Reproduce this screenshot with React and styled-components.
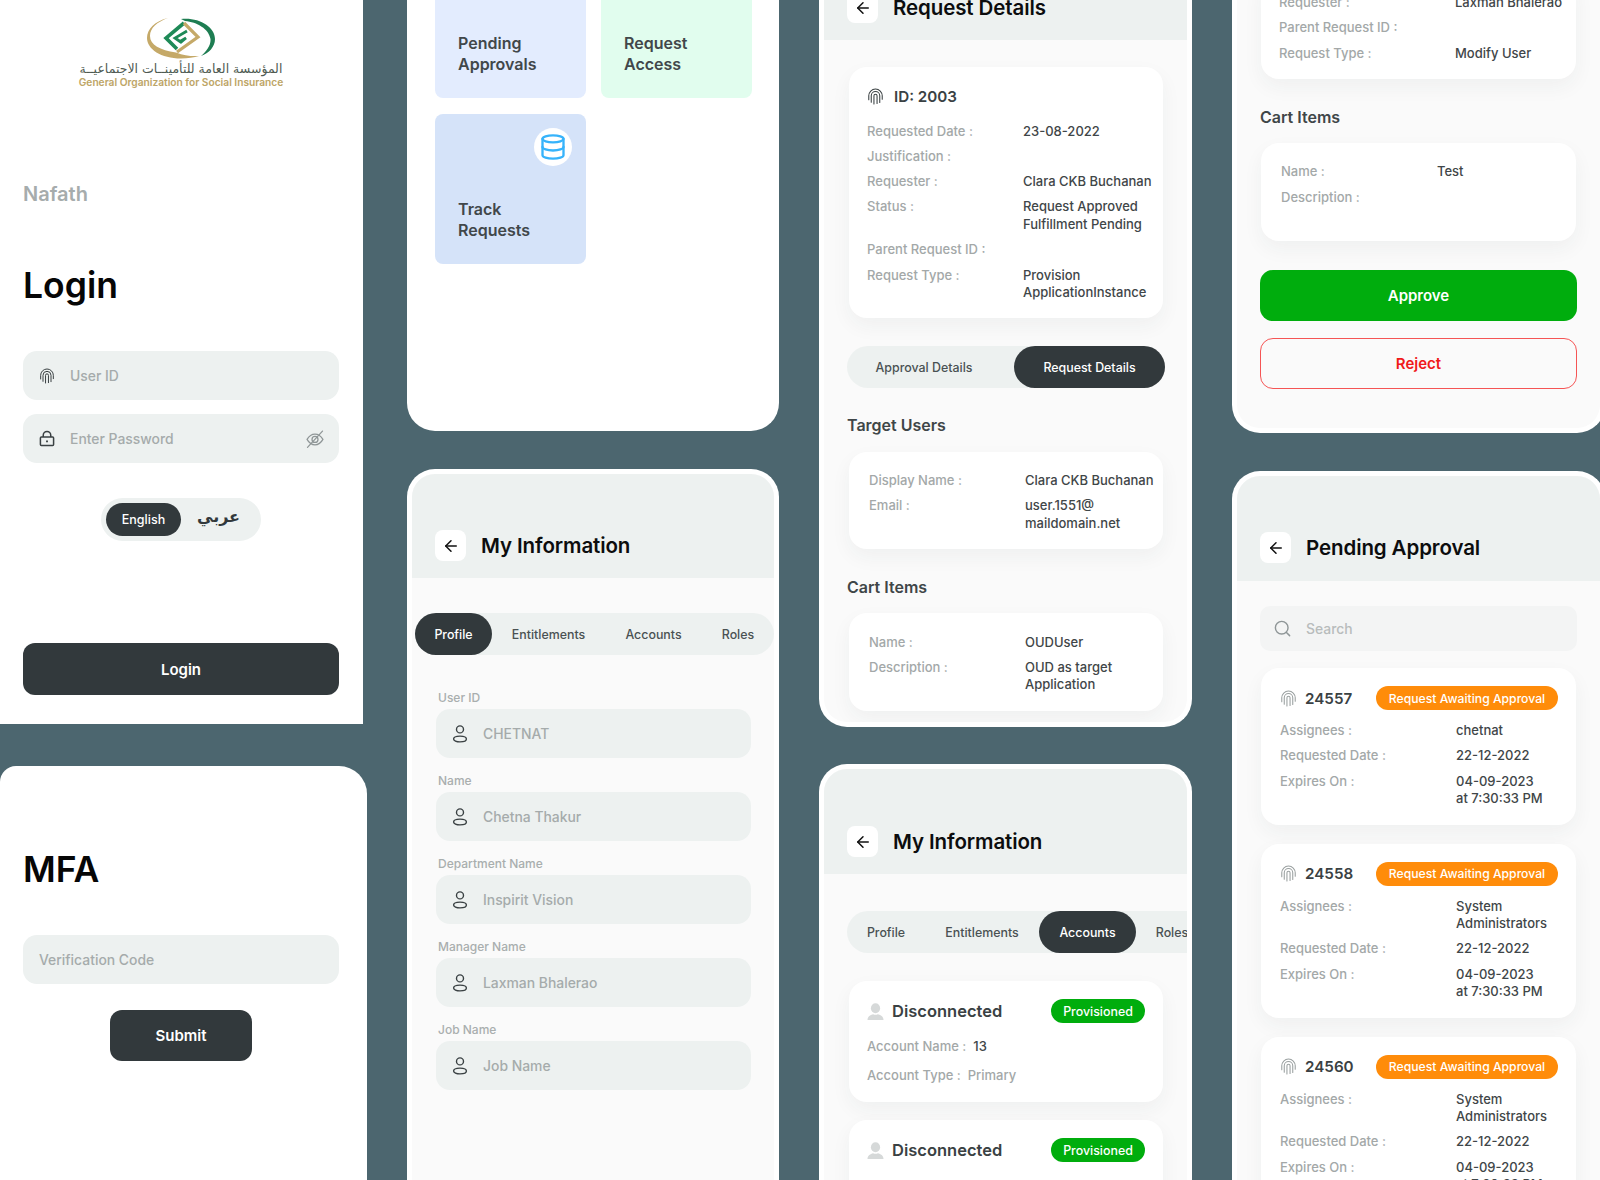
import React from "react";
import styled, { createGlobalStyle } from "styled-components";
import { ArrowLeft, Database, Search } from "lucide-react";

const GlobalStyle = createGlobalStyle`
  html, body {
    margin: 0;
    padding: 0;
    background: #4c666f;
  }
  * {
    box-sizing: border-box;
  }
  body {
    font-family: "Inter", "Noto Sans", "Liberation Sans", sans-serif;
    color: #3a4143;
  }
`;

const Page = styled.div`
  width: 1600px;
  height: 1180px;
  overflow: hidden;
  display: flex;
  gap: 40px;
  background: #4c666f;
`;

const Column = styled.div`
  flex: none;
  width: ${(p) => p.$w}px;
  height: 1180px;
  display: flex;
  flex-direction: column;
  justify-content: space-between;
`;

const Sheet = styled.section`
  flex: none;
  width: ${(p) => p.$w || 367}px;
  height: ${(p) => p.$h}px;
  background: #fff;
  overflow: hidden;
  padding: ${(p) => p.$pad || "0"};
  display: flex;
  flex-direction: column;
  border-radius: ${(p) => p.$radius || "0"};
`;

// phone frame with the white rim, the open side is cut by the page edge
const Phone = styled.section`
  flex: none;
  width: 100%;
  height: ${(p) => p.$h}px;
  background: ${(p) => p.$bg || "#fafafa"};
  border: 5px solid #fff;
  ${(p) => (p.$bottom ? "border-top: 0;" : "border-bottom: 0;")}
  border-radius: ${(p) => (p.$bottom ? "0 0 28px 28px" : "28px 28px 0 0")};
  overflow: hidden;
  display: flex;
  flex-direction: column;
  justify-content: ${(p) => (p.$bottom ? "flex-end" : "flex-start")};
`;

const Head = styled.header`
  flex: none;
  height: ${(p) => p.$h || 105}px;
  background: #edf1f0;
  padding: 0 0 ${(p) => p.$pb || 17}px 23px;
  display: flex;
  align-items: flex-end;
  gap: 15px;
`;

const BackButton = styled.div`
  width: 31px;
  height: 31px;
  border-radius: 8px;
  background: #fff;
  color: #111;
  display: flex;
  align-items: center;
  justify-content: center;
`;

const HeadTitle = styled.h2`
  margin: 0;
  height: 31px;
  line-height: 31px;
  font-size: 20.5px;
  font-weight: 600;
  color: #0c0d0e;
  letter-spacing: -0.1px;
  white-space: nowrap;
`;

const Body = styled.div`
  flex: none;
  padding: ${(p) => p.$pad || "0 23px"};
  display: flex;
  flex-direction: column;
`;

/* login */
const LogoBlock = styled.div`
  height: 70px;
  display: flex;
  flex-direction: column;
  align-items: center;
  margin-top: 18px;
`;

const LogoArabic = styled.div`
  font-family: "DejaVu Sans", sans-serif;
  font-size: 12.5px;
  line-height: 14px;
  margin-top: 3px;
  color: #4f5b52;
  white-space: nowrap;
`;

const LogoLatin = styled.div`
  font-size: 10.2px;
  line-height: 12px;
  font-weight: 600;
  color: #bda566;
  white-space: nowrap;
`;

const Nafath = styled.div`
  margin-top: 94px;
  font-size: 20px;
  line-height: 24px;
  font-weight: 600;
  color: #a6acac;
`;

const BigTitle = styled.h1`
  margin: ${(p) => p.$mt}px 0 0;
  font-size: 35.5px;
  line-height: 44px;
  font-weight: 600;
  color: #060606;
`;

const InputBox = styled.div`
  flex: none;
  height: 49px;
  margin-top: ${(p) => p.$mt || 0}px;
  border-radius: 14px;
  background: #edf1f0;
  padding: 0 14px 0 16px;
  display: flex;
  align-items: center;
  gap: 15px;
  color: #3a4143;
`;

const Placeholder = styled.span`
  flex: 1;
  font-size: 13.9px;
  font-weight: 500;
  color: #a5abab;
`;

const LangToggle = styled.div`
  align-self: center;
  margin-top: 35px;
  width: 160px;
  height: 43px;
  padding: 5px;
  border-radius: 22px;
  background: #edf1f0;
  display: flex;
  align-items: center;
`;

const LangOn = styled.div`
  width: 75px;
  height: 33px;
  border-radius: 17px;
  background: #32393c;
  color: #fff;
  font-size: 12.5px;
  font-weight: 500;
  display: flex;
  align-items: center;
  justify-content: center;
`;

const LangOff = styled.div`
  flex: 1;
  text-align: center;
  font-family: "DejaVu Sans", sans-serif;
  font-size: 16px;
  font-weight: 700;
  line-height: 24px;
  margin-bottom: 5px;
  color: #32393c;
`;

const DarkButton = styled.div`
  flex: none;
  align-self: ${(p) => (p.$w ? "center" : "stretch")};
  width: ${(p) => (p.$w ? `${p.$w}px` : "auto")};
  height: ${(p) => p.$h}px;
  margin-top: ${(p) => p.$mt}px;
  border-radius: 12px;
  background: #32393c;
  color: #fff;
  font-size: 15px;
  font-weight: 600;
  display: flex;
  align-items: center;
  justify-content: center;
`;

/* home tiles */
const TileGrid = styled.div`
  display: grid;
  grid-template-columns: 151px 151px;
  gap: 16px 15px;
  padding: 0 0 162px 23px;
`;

const Tile = styled.div`
  height: 150px;
  border-radius: 8px;
  background: ${(p) => p.$bg};
  padding: 14px 14px 23px 23px;
  display: flex;
  flex-direction: column;
  justify-content: space-between;
`;

const TileBadge = styled.div`
  align-self: flex-end;
  width: 38px;
  height: 38px;
  border-radius: 50%;
  background: #fff;
  color: #36b3fb;
  display: flex;
  align-items: center;
  justify-content: center;
`;

const TileText = styled.div`
  font-size: 16px;
  line-height: 21px;
  font-weight: 600;
  color: #41474a;
`;

/* tabs */
const Tabs = styled.div`
  flex: none;
  display: flex;
  justify-content: ${(p) => (p.$split ? "space-between" : "flex-start")};
  width: ${(p) => p.$w}px;
  height: 42px;
  margin: ${(p) => p.$margin};
  border-radius: 21px;
  background: #edf1f0;
`;

const Tab = styled.div`
  flex: none;
  width: ${(p) => p.$w}px;
  border-radius: 21px;
  background: ${(p) => (p.$on ? "#32393c" : "transparent")};
  color: ${(p) => (p.$on ? "#fff" : "#4a5153")};
  font-size: 12.4px;
  font-weight: 500;
  display: flex;
  align-items: center;
  justify-content: center;
`;

/* profile form */
const FieldList = styled.div`
  margin: 36px 23px 0 24px;
  display: flex;
  flex-direction: column;
  gap: 16px;
`;

const Field = styled.div`
  display: flex;
  flex-direction: column;
  gap: 4px;
`;

const FieldLabel = styled.label`
  padding-left: 2px;
  font-size: 12px;
  line-height: 14px;
  font-weight: 500;
  color: #a9aeae;
`;

/* cards */
const Card = styled.div`
  flex: none;
  margin: ${(p) => p.$margin || "0 2px"};
  padding: ${(p) => p.$pad || "18px 14px 18px 18px"};
  background: #fff;
  border-radius: 18px;
  box-shadow: 0 8px 20px rgba(40, 50, 55, 0.05);
`;

const CardHead = styled.div`
  display: flex;
  align-items: center;
  justify-content: space-between;
  height: 24px;
  margin-bottom: ${(p) => p.$mb || 14}px;
`;

const IdWrap = styled.div`
  display: flex;
  align-items: center;
  gap: ${(p) => p.$gap || 10}px;
  color: ${(p) => p.$icon || "#3a4143"};
`;

const IdText = styled.span`
  font-size: ${(p) => p.$size || 15.2}px;
  font-weight: 600;
  color: #3a4143;
`;

const Pill = styled.span`
  flex: none;
  height: 24px;
  width: ${(p) => p.$w}px;
  border-radius: 12px;
  background: ${(p) => p.$bg};
  color: #fff;
  font-size: ${(p) => p.$size || 12.2}px;
  font-weight: 500;
  display: flex;
  align-items: center;
  justify-content: center;
`;

const Rows = styled.div`
  display: grid;
  grid-template-columns: ${(p) => p.$col || 156}px 1fr;
  row-gap: 7.8px;
  font-size: 13px;
  line-height: 17.5px;
  font-weight: 500;
`;

const RowLabel = styled.div`
  color: #a3a8a8;
  white-space: nowrap;
`;

const RowValue = styled.div`
  color: #3f4648;
  white-space: pre-line;
`;

const SectionTitle = styled.h3`
  margin: ${(p) => p.$mt}px 0 ${(p) => p.$mb}px;
  font-size: 16px;
  line-height: 24px;
  font-weight: 600;
  color: #3f4648;
`;

const InlineRow = styled.div`
  display: flex;
  gap: 7px;
  margin-top: ${(p) => p.$mt || 0}px;
  font-size: 13px;
  line-height: 17.5px;
  font-weight: 500;
  color: #a3a8a8;
`;

const InlineValue = styled.span`
  color: ${(p) => p.$color || "#3f4648"};
`;

/* approve screen buttons */
const ActionButton = styled.div`
  flex: none;
  height: 51px;
  margin-top: ${(p) => p.$mt}px;
  border-radius: 13px;
  font-size: 15px;
  font-weight: 600;
  background: ${(p) => (p.$green ? "#00ad0d" : "transparent")};
  color: ${(p) => (p.$green ? "#fff" : "#f01a1a")};
  border: ${(p) => (p.$green ? "0" : "1.5px solid #f55454")};
  display: flex;
  align-items: center;
  justify-content: center;
`;

const SearchBox = styled.div`
  flex: none;
  height: 45px;
  margin-top: 25px;
  border-radius: 10px;
  background: #f3f4f4;
  padding: 0 13px;
  display: flex;
  align-items: center;
  gap: 14px;
  font-size: 13.9px;
  font-weight: 500;
  color: #b8bcbc;
`;

const ApprovalList = styled.div`
  margin-top: 17px;
  display: flex;
  flex-direction: column;
  gap: 18.5px;
`;

/* drawn icons */
const Fingerprint = ({ size = 17 }) => (
  <svg width={size} height={size} viewBox="0 0 24 24" fill="none" stroke="currentColor" strokeWidth="1.5" strokeLinecap="round">
    <path d="M2.5 16.500V11a9.500 9.500 0 0 1 19 0v5" />
    <path d="M6 20V11a6 6 0 0 1 12 0v9.500" />
    <path d="M9.800 22.500V11a2.200 2.200 0 0 1 4.400 0v11" />
  </svg>
);

const LockIcon = () => (
  <svg width="16" height="17" viewBox="0 0 17 17" fill="none" stroke="#3a4143" strokeWidth="1.600">
    <rect x="1.500" y="7" width="14" height="9" rx="1" />
    <path d="M4.500 7V5a4 4 0 0 1 8 0v2" />
    <path d="M8.500 10.500v2" strokeWidth="2" />
  </svg>
);

const EyeSlash = () => (
  <svg width="20" height="20" viewBox="0 0 24 24" fill="none" stroke="#8f9697" strokeWidth="1.500" strokeLinecap="round">
    <path d="M2.500 12.500C5 8 8.200 6 12 6s7 2 9.500 6.500C19 17 15.800 19 12 19s-7-2-9.500-6.500Z" />
    <circle cx="12" cy="12.500" r="3.600" />
    <path d="M21 2.500 3 22" />
  </svg>
);

const PersonOutline = () => (
  <svg width="16" height="18" viewBox="0 0 16 18" fill="none" stroke="#3a4143" strokeWidth="1.400">
    <circle cx="8" cy="4.400" r="3.500" />
    <ellipse cx="8" cy="14" rx="6.400" ry="2.900" />
  </svg>
);

const PersonSolid = () => (
  <svg width="17" height="17" viewBox="0 0 17 17" fill="#d6d9d9">
    <ellipse cx="8.500" cy="5.200" rx="4.600" ry="5" />
    <path d="M0.500 17c0-3.600 3-5.200 5.600-5.800 1.500.7 3.300.7 4.800 0 2.600.6 5.600 2.200 5.600 5.800Z" />
  </svg>
);

const Emblem = () => (
  <svg width="68" height="41" viewBox="0 0 68 41" fill="none">
    <path d="M21 0C8 3 0 11 0 20c0 11 14 20.500 34 20.500 7 0 13-1 18-2.500-8 .5-15-.5-23-3.500C13 32 3 27 3 18 3 10 10 4 21 0Z" fill="#c5a968" />
    <path d="M34 1C52 -1 68 9 68 21c0 8-6 14-14 17 6-5 10-11 9.500-17C62 11 50 4 38 3Z" fill="#1e7d52" />
    <path d="M37 5 19 20l11 11" stroke="#1e8a57" strokeWidth="3.600" />
    <path d="M37 5l14 14-21 15" stroke="#c5a968" strokeWidth="3.200" />
    <path d="M40 13 28 20l5 3.500 6-3.500-6 5" stroke="#1e8a57" strokeWidth="2.800" />
  </svg>
);

const Back = () => (
  <BackButton>
    <ArrowLeft size={18} strokeWidth={2} />
  </BackButton>
);

const DetailRows = ({ rows, col }) => (
  <Rows $col={col}>
    {rows.map(([label, value]) => (
      <React.Fragment key={label}>
        <RowLabel>{label}</RowLabel>
        <RowValue>{value}</RowValue>
      </React.Fragment>
    ))}
  </Rows>
);

const profileFields = [
  ["User ID", "CHETNAT"],
  ["Name", "Chetna Thakur"],
  ["Department Name", "Inspirit Vision"],
  ["Manager Name", "Laxman Bhalerao"],
  ["Job Name", "Job Name"],
];

const approvals = [
  {
    id: "24557",
    rows: [
      ["Assignees :", "chetnat"],
      ["Requested Date :", "22-12-2022"],
      ["Expires On :", "04-09-2023\nat 7:30:33 PM"],
    ],
  },
  {
    id: "24558",
    rows: [
      ["Assignees :", "System\nAdministrators"],
      ["Requested Date :", "22-12-2022"],
      ["Expires On :", "04-09-2023\nat 7:30:33 PM"],
    ],
  },
  {
    id: "24560",
    rows: [
      ["Assignees :", "System\nAdministrators"],
      ["Requested Date :", "22-12-2022"],
      ["Expires On :", "04-09-2023\nat 7:30:33 PM"],
    ],
  },
];

const App = () => (
  <Page>
    <GlobalStyle />

    <Column $w={367}>
      <Sheet $w={363} $h={724} $pad="0 24px 0 23px">
        <LogoBlock>
          <Emblem />
          <LogoArabic dir="rtl">المؤسسة العامة للتأمينــات الاجتماعيــة</LogoArabic>
          <LogoLatin>General Organization for Social Insurance</LogoLatin>
        </LogoBlock>
        <Nafath>Nafath</Nafath>
        <BigTitle $mt={58}>Login</BigTitle>
        <InputBox $mt={43}>
          <Fingerprint size={16} />
          <Placeholder>User ID</Placeholder>
        </InputBox>
        <InputBox $mt={14}>
          <LockIcon />
          <Placeholder>Enter Password</Placeholder>
          <EyeSlash />
        </InputBox>
        <LangToggle>
          <LangOn>English</LangOn>
          <LangOff>عربي</LangOff>
        </LangToggle>
        <DarkButton $h={52} $mt={102}>Login</DarkButton>
      </Sheet>
      <Sheet $h={414} $pad="82px 28px 0 23px" $radius="16px 28px 0 0">
        <BigTitle $mt={0}>MFA</BigTitle>
        <InputBox $mt={43}>
          <Placeholder>Verification Code</Placeholder>
        </InputBox>
        <DarkButton $w={142} $h={51} $mt={26}>Submit</DarkButton>
      </Sheet>
    </Column>

    <Column $w={372}>
      <Phone $h={431} $bottom $bg="#fff">
        <TileGrid>
          <Tile $bg="#e3ecfe">
            <TileBadge />
            <TileText>Pending<br />Approvals</TileText>
          </Tile>
          <Tile $bg="#e1fdee">
            <TileBadge />
            <TileText>Request<br />Access</TileText>
          </Tile>
          <Tile $bg="#d5e3f9">
            <TileBadge>
              <Database size={28} strokeWidth={2} />
            </TileBadge>
            <TileText>Track<br />Requests</TileText>
          </Tile>
        </TileGrid>
      </Phone>
      <Phone $h={711}>
        <Head $h={104}>
          <Back />
          <HeadTitle>My Information</HeadTitle>
        </Head>
        <Tabs $w={359} $margin="35px 0 0 3px">
          <Tab $w={77} $on>Profile</Tab>
          <Tab $w={113}>Entitlements</Tab>
          <Tab $w={97}>Accounts</Tab>
          <Tab $w={72}>Roles</Tab>
        </Tabs>
        <FieldList>
          {profileFields.map(([label, value]) => (
            <Field key={label}>
              <FieldLabel>{label}</FieldLabel>
              <InputBox>
                <PersonOutline />
                <Placeholder>{value}</Placeholder>
              </InputBox>
            </Field>
          ))}
        </FieldList>
      </Phone>
    </Column>

    <Column $w={373}>
      <Phone $h={727} $bottom>
        <Head>
          <Back />
          <HeadTitle>Request Details</HeadTitle>
        </Head>
        <Body $pad="27px 22px 11px 23px">
          <Card $pad="17px 6px 16.500px 18px">
            <CardHead $mb={14.500}>
              <IdWrap>
                <Fingerprint />
                <IdText>ID: 2003</IdText>
              </IdWrap>
            </CardHead>
            <DetailRows
              rows={[
                ["Requested Date :", "23-08-2022"],
                ["Justification :", ""],
                ["Requester :", "Clara CKB Buchanan"],
                ["Status :", "Request Approved\nFulfillment Pending"],
                ["Parent Request ID :", ""],
                ["Request Type :", "Provision\nApplicationInstance"],
              ]}
            />
          </Card>
          <Tabs $w={318} $margin="28px 0 0" $split>
            <Tab $w={154}>Approval Details</Tab>
            <Tab $w={151} $on>Request Details</Tab>
          </Tabs>
          <SectionTitle $mt={25} $mb={15}>Target Users</SectionTitle>
          <Card $pad="20px 6px 16.700px 20px">
            <DetailRows
              rows={[
                ["Display Name :", "Clara CKB Buchanan"],
                ["Email :", "user.1551@\nmaildomain.net"],
              ]}
            />
          </Card>
          <SectionTitle $mt={26} $mb={14}>Cart Items</SectionTitle>
          <Card $pad="20.500px 6px 17.200px 20px">
            <DetailRows
              rows={[
                ["Name :", "OUDUser"],
                ["Description :", "OUD as target\nApplication"],
              ]}
            />
          </Card>
        </Body>
      </Phone>
      <Phone $h={416}>
        <Head>
          <Back />
          <HeadTitle>My Information</HeadTitle>
        </Head>
        <Tabs $w={380} $margin="37px 0 0 23px">
          <Tab $w={78}>Profile</Tab>
          <Tab $w={114}>Entitlements</Tab>
          <Tab $w={97} $on>Accounts</Tab>
          <Tab $w={72}>Roles</Tab>
        </Tabs>
        <Body $pad="28px 22px 0 23px">
          {[0, 1].map((n) => (
            <Card key={n} $margin={n ? "18px 2px 0" : "0 2px"} $pad="18px 18px 17.500px 18px">
              <CardHead $mb={15}>
                <IdWrap $gap={8}>
                  <PersonSolid />
                  <IdText $size={16.500}>Disconnected</IdText>
                </IdWrap>
                <Pill $w={94} $bg="#00ad0d" $size={12.400}>Provisioned</Pill>
              </CardHead>
              <InlineRow>
                Account Name :<InlineValue>13</InlineValue>
              </InlineRow>
              <InlineRow $mt={11.500}>
                Account Type :<InlineValue $color="#a3a8a8">Primary</InlineValue>
              </InlineRow>
            </Card>
          ))}
        </Body>
      </Phone>
    </Column>

    <Column $w={373}>
      <Phone $h={433} $bottom>
        <Body $pad="0 23px 39px">
          <Card $margin="0 1px" $pad="18px 6px 17px 18px">
            <DetailRows
              col={176}
              rows={[
                ["Requester :", "Laxman Bhalerao"],
                ["Parent Request ID :", ""],
                ["Request Type :", "Modify User"],
              ]}
            />
          </Card>
          <SectionTitle $mt={26} $mb={14}>Cart Items</SectionTitle>
          <Card $margin="0 1px" $pad="20px 14px 35px 20px">
            <DetailRows
              rows={[
                ["Name :", "Test"],
                ["Description :", ""],
              ]}
            />
          </Card>
          <ActionButton $green $mt={29}>Approve</ActionButton>
          <ActionButton $mt={17}>Reject</ActionButton>
        </Body>
      </Phone>
      <Phone $h={709}>
        <Head $pb={18}>
          <Back />
          <HeadTitle>Pending Approval</HeadTitle>
        </Head>
        <Body>
          <SearchBox>
            <Search size={19} strokeWidth={1.800} color="#8f9697" />
            Search
          </SearchBox>
          <ApprovalList>
            {approvals.map((item) => (
              <Card key={item.id} $margin="0 1px" $pad="18px 18px 17.500px 19px">
                <CardHead $mb={12}>
                  <IdWrap $gap={8} $icon="#9aa0a0">
                    <Fingerprint />
                    <IdText>{item.id}</IdText>
                  </IdWrap>
                  <Pill $w={182} $bg="#ff8c0a">Request Awaiting Approval</Pill>
                </CardHead>
                <DetailRows col={176} rows={item.rows} />
              </Card>
            ))}
          </ApprovalList>
        </Body>
      </Phone>
    </Column>
  </Page>
);

export default App;
